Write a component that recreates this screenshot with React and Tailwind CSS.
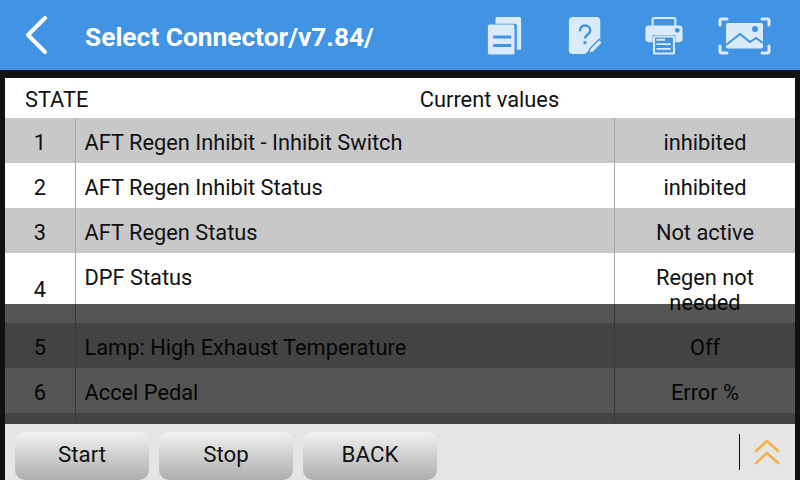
const rows = [
  { id: 1, name: 'AFT Regen Inhibit - Inhibit Switch', value: 'inhibited' },
  { id: 2, name: 'AFT Regen Inhibit Status', value: 'inhibited' },
  { id: 3, name: 'AFT Regen Status', value: 'Not active' },
  { id: 4, name: 'DPF Status', value: 'Regen not needed', tall: true },
  { id: 5, name: 'Lamp: High Exhaust Temperature', value: 'Off' },
  { id: 6, name: 'Accel Pedal', value: 'Error %' },
  { id: 7, name: '', value: '' },
]

const DocsIcon = () => (
  <svg width="36" height="38" viewBox="0 0 36 40" fill="#d9eafa">
    <path d="M8 1.5a1.5 1.5 0 0 1 1.5-1.5H33a2 2 0 0 1 2 2v31.5a1 1 0 0 1-1 1h-3.5V9a2 2 0 0 0-2-2H8z" />
    <path fillRule="evenodd" d="M2 8h24a2 2 0 0 1 2 2v27.5a2 2 0 0 1-2 2H2a2 2 0 0 1-2-2V10a2 2 0 0 1 2-2zm3.5 11.500v3h19v-3zm0 9v3h19v-3z" />
  </svg>
)

const HelpIcon = () => (
  <svg width="36" height="38" viewBox="0 0 36 40">
    <path d="M4 0h25a4 4 0 0 1 4 4v21L17 39H4a4 4 0 0 1-4-4V4a4 4 0 0 1 4-4z" fill="#d9eafa" />
    <path d="M11.500 15c0-4 2.700-6 5.500-6s5.500 2 5.500 5.200c0 4-5.500 4.300-5.500 8.300" fill="none" stroke="#4094e3" strokeWidth="2.600" />
    <circle cx="17" cy="27" r="1.800" fill="#4094e3" />
    <path d="M21 38.500l1-5 10-10 3.500 3.500-10 10z" fill="#d9eafa" stroke="#4094e3" strokeWidth="1.500" />
  </svg>
)

const PrintIcon = () => (
  <svg width="40" height="38" viewBox="0 0 40 40">
    <path d="M8 11V3a2 2 0 0 1 2-2h20a2 2 0 0 1 2 2v8" fill="none" stroke="#d9eafa" strokeWidth="2" />
    <path d="M4 9h32a3.500 3.500 0 0 1 3.500 3.500V23a3.500 3.500 0 0 1-3.500 3.500h-4V19H8v7.500H4A3.500 3.500 0 0 1 .5 23V12.500A3.500 3.500 0 0 1 4 9z" fill="#d9eafa" />
    <circle cx="34" cy="14" r="2.500" fill="#4094e3" />
    <rect x="9.500" y="20.500" width="21" height="18" rx="1" fill="none" stroke="#d9eafa" strokeWidth="2.200" />
    <path d="M12 23h9v2h-9zM12 27.500h15v2h-15zM12 32.500h15v2h-15z" fill="#d9eafa" />
  </svg>
)

const PhotoIcon = () => (
  <svg width="53" height="38" viewBox="0 0 53 38">
    <path d="M9 2H3.500A1.500 1.500 0 0 0 2 3.500V8M44 2h5.500A1.500 1.500 0 0 1 51 3.500V8M9 36H3.500A1.500 1.500 0 0 1 2 34.500V29M44 36h5.500a1.500 1.500 0 0 0 1.500-1.500V29" fill="none" stroke="#d9eafa" strokeWidth="3" strokeLinecap="round" />
    <path d="M10 6h33a2 2 0 0 1 2 2v21.500a2 2 0 0 1-2 2H10a2 2 0 0 1-2-2V8a2 2 0 0 1 2-2z" fill="#d9eafa" />
    <circle cx="37" cy="12" r="3" fill="#4094e3" />
    <path d="M8 28l14-11 10 8 6-4 7 5" fill="none" stroke="#4094e3" strokeWidth="2" />
  </svg>
)

const Cell = ({ className, children }) => (
  <div className={`text-[21.8px] leading-[25px] text-[#111] ${className}`}>{children}</div>
)

const App = () => {
  return (
    <div className="w-[800px] h-[480px] flex flex-col overflow-hidden bg-[#111] font-['Roboto',sans-serif]">
      {/* top bar */}
      <div className="h-[70px] shrink-0 flex items-center bg-[#4094e3] text-white">
        <svg className="ml-[25px]" width="22" height="38" viewBox="0 0 22 38" fill="none">
          <path d="M20 2L3 19l17 17" stroke="white" strokeWidth="4" strokeLinecap="round" strokeLinejoin="round" />
        </svg>
        <h1 className="ml-[38px] w-[401px] pt-[5px] text-[26.3px] font-bold whitespace-nowrap">Select Connector/v7.84/</h1>
        <div className="flex items-center pt-[1px]">
          <div className="w-[36px] flex justify-center ml-[1px]"><DocsIcon /></div>
          <div className="w-[36px] flex justify-center ml-[45px]"><HelpIcon /></div>
          <div className="w-[40px] flex justify-center ml-[40px]"><PrintIcon /></div>
          <div className="w-[53px] flex justify-center ml-[34px]"><PhotoIcon /></div>
        </div>
      </div>

      {/* table + footer */}
      <div className="flex-1 min-h-0 mx-[5px] mt-[8px] flex flex-col">
        <div className="relative h-[346px] overflow-hidden bg-white">
          <div className="h-[40px] flex items-center pt-[3px]">
            <Cell className="w-[70px] pl-[20px]">STATE</Cell>
            <Cell className="w-[720px] pl-[109px] text-center">Current values</Cell>
          </div>
          {rows.map((r, i) => (
            <div key={r.id} className={`flex ${r.tall ? 'h-[70px]' : 'h-[45px]'} ${i % 2 === 0 ? 'bg-[#c8c8c8]' : 'bg-white'}`}>
              <Cell className="w-[71px] shrink-0 flex items-center justify-center border-r border-[#aaa] pt-[3px]">{i < 6 ? r.id : ''}</Cell>
              <Cell className={`w-[539px] shrink-0 pl-[8.5px] border-r border-[#aaa] flex ${r.tall ? 'pt-[12px]' : 'items-center pt-[3px]'}`}>{r.name}</Cell>
              <Cell className={`flex-1 text-center ${r.tall ? 'pt-[12px] px-[20px]' : 'flex items-center justify-center pt-[3px]'}`}>{r.value}</Cell>
            </div>
          ))}
          {/* dimmed layer over the lower rows */}
          <div className="absolute left-0 right-0 bottom-0 h-[120px] bg-black/[0.667]" />
        </div>

        <div className="flex-1 flex items-start bg-[#e5e5e5] pt-[8px] pl-[10px]">
          {['Start', 'Stop', 'BACK'].map((b) => (
            <button key={b} className="w-[134px] h-[48px] mr-[10px] rounded-[10px] bg-gradient-to-b from-[#f2f2f2] to-[#aeaeae] text-[22.3px] text-[#111] pb-[3px]">
              {b}
            </button>
          ))}
          <div className="ml-auto mt-[2px] flex items-center mr-[15px]">
            <div className="w-px h-[36px] bg-[#111]" />
            <svg className="ml-[14px]" width="26" height="26" viewBox="0 0 26 26" fill="none">
              <path d="M2 12L13 2l11 10M2 24l11-10 11 10" stroke="#f5b041" strokeWidth="2.600" strokeLinecap="round" strokeLinejoin="round" />
            </svg>
          </div>
        </div>
      </div>
    </div>
  )
}

export default App
